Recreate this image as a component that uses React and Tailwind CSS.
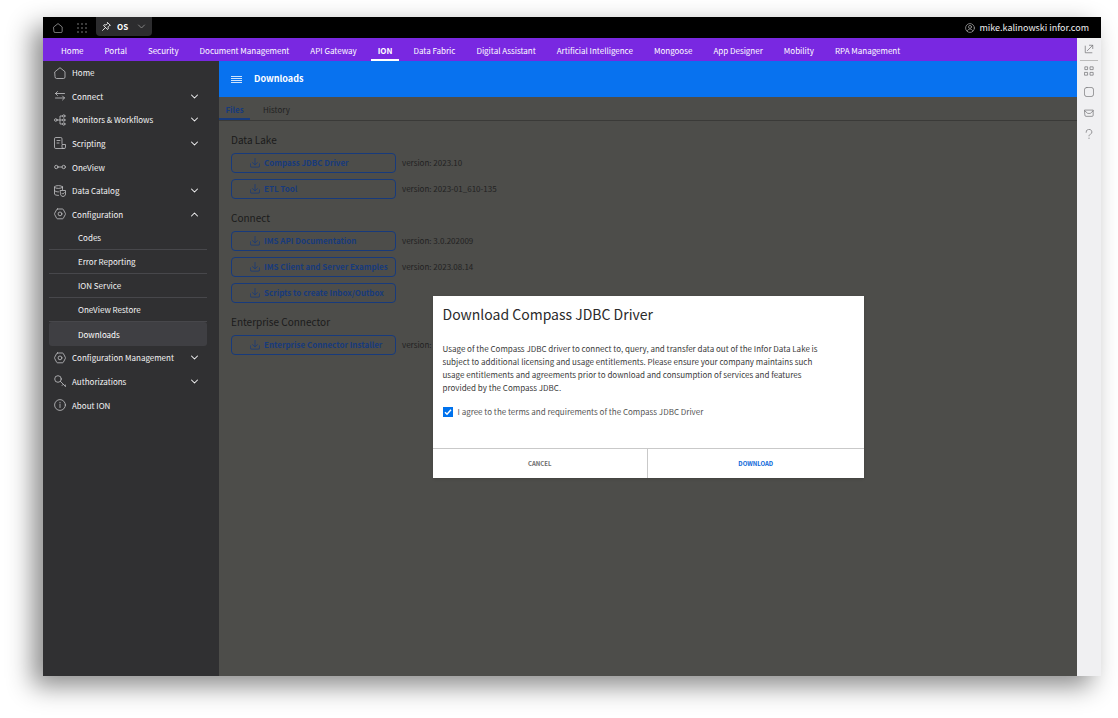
import { useState } from "react";

const NAV_ITEMS = [
  "Home",
  "Portal",
  "Security",
  "Document Management",
  "API Gateway",
  "ION",
  "Data Fabric",
  "Digital Assistant",
  "Artificial Intelligence",
  "Mongoose",
  "App Designer",
  "Mobility",
  "RPA Management",
];

const MAIN_MENU = [
  { label: "Home", icon: "home" },
  { label: "Connect", icon: "connect", chevron: "down" },
  { label: "Monitors & Workflows", icon: "workflow", chevron: "down" },
  { label: "Scripting", icon: "script", chevron: "down" },
  { label: "OneView", icon: "oneview" },
  { label: "Data Catalog", icon: "catalog", chevron: "down" },
  { label: "Configuration", icon: "config", chevron: "up" },
];

const CONFIG_MENU = ["Codes", "Error Reporting", "ION Service", "OneView Restore", "Downloads"];

const MORE_MENU = [
  { label: "Configuration Management", icon: "config", chevron: "down" },
  { label: "Authorizations", icon: "key", chevron: "down" },
  { label: "About ION", icon: "info" },
];

const SECTIONS = [
  {
    title: "Data Lake",
    files: [
      { name: "Compass JDBC Driver", version: "version: 2023.10" },
      { name: "ETL Tool", version: "version: 2023-01_610-135" },
    ],
  },
  {
    title: "Connect",
    files: [
      { name: "IMS API Documentation", version: "version: 3.0.202009" },
      { name: "IMS Client and Server Examples", version: "version: 2023.08.14" },
      { name: "Scripts to create Inbox/Outbox" },
    ],
  },
  {
    title: "Enterprise Connector",
    files: [{ name: "Enterprise Connector Installer", version: "version:" }],
  },
];

const ICONS = {
  home: <path d="M1 4.700 6 .700l5 4V10a1.500 1.500 0 0 1-1.500 1.500h-7A1.500 1.500 0 0 1 1 10Z" />,
  connect: <path d="M3.500 1.500 1.500 3.500l2 2M1.500 3.500h9M1.500 8h9M8.500 6l2 2-2 2" />,
  workflow: (
    <>
      <circle cx="1.800" cy="6" r="1.300" />
      <circle cx="9.800" cy="2" r="1.200" />
      <circle cx="9.800" cy="6" r="1.200" />
      <circle cx="9.800" cy="10" r="1.200" />
      <path d="M3.100 6h5.500M8.600 2H6v8h2.600" />
    </>
  ),
  script: (
    <>
      <path d="M8 6.500V1.800A1.300 1.300 0 0 0 6.700.500H1.800A1.300 1.300 0 0 0 .500 1.800v8.400a1.300 1.300 0 0 0 1.300 1.300h8a1.400 1.400 0 0 0 1.700-1.400V7.500H8v2.600a1.400 1.400 0 0 0 1.800 1.400" />
      <path d="M3 3.500h3M3 6h2" />
    </>
  ),
  oneview: (
    <>
      <circle cx="2.300" cy="6" r="1.700" />
      <circle cx="9.700" cy="6" r="1.700" />
      <path d="M4 6h4" />
    </>
  ),
  catalog: (
    <>
      <ellipse cx="4.500" cy="2" rx="4" ry="1.400" />
      <path d="M.500 2v7c0 .800 1.800 1.400 4 1.400M8.500 2v2.500M.500 5.500c0 .800 1.800 1.400 4 1.400" />
      <path d="M6.500 5.500h5v3.500c0 1.500-1 2.200-2.500 2.500-1.500-.300-2.500-1-2.500-2.500ZM8 8.300l.800.800 1.500-1.500" />
    </>
  ),
  config: (
    <>
      <path d="M3.500 1h5a1 1 0 0 1 .800.500l2 3.800a1.200 1.200 0 0 1 0 1.200l-2 3.800a1 1 0 0 1-.800.500h-5a1 1 0 0 1-.800-.500l-2-3.800a1.200 1.200 0 0 1 0-1.200l2-3.800A1 1 0 0 1 3.500 1Z" />
      <circle cx="6" cy="5.900" r="1.900" />
    </>
  ),
  key: (
    <>
      <circle cx="4" cy="4" r="3.300" />
      <path d="m6.500 6.500 4.800 4.800M9.300 9.300l-1.200 1.200M11.300 11.300V10" />
    </>
  ),
  info: (
    <>
      <circle cx="6" cy="6" r="5.400" />
      <path d="M6 5.200v3.300M6 3.300v.500" />
    </>
  ),
  grid: (
    <path d="M1.500 1h2.800v3.300H1V1.500ZM7.700 1H11v3.300H7.700ZM1 7.700h3.300V11H1ZM7.700 7.700H11V11H7.700Z" />
  ),
  square: <rect x=".5" y=".5" width="11" height="11" rx="3" />,
  open: <path d="M1.500 2.500v8h8M4 8l6.500-6.500M6.500 1.500h4v4" />,
  mail: <path d="M1 2.500h10v6.200a1.300 1.300 0 0 1-1.300 1.300H2.300A1.300 1.300 0 0 1 1 8.700ZM1 3.500l3.500 3h3l3.500-3" />,
  help: <path d="M2.500 4A3.500 3.200 0 1 1 7.500 6.500C6.500 7 6 7.300 6 8.300M6 10.800v.700" />,
  user: (
    <>
      <circle cx="6" cy="6" r="5.300" />
      <circle cx="6" cy="4.700" r="1.800" />
      <path d="M2.800 9.700C3 8 4.500 7.300 6 7.300s3 .700 3.200 2.400" />
    </>
  ),
  pin: <path d="M7.500.800 11.200 4.500 9.500 5 8 6.500l.300 2.800-1 .700L2 4.700l.700-1 2.800.300L7 2.500ZM4.600 7.400.800 11.200" />,
  download: <path d="M6 .500v7.500M3 5.500l3 2.800 3-2.800M.500 7v2.500A1.500 1.500 0 0 0 2 11h8a1.500 1.500 0 0 0 1.500-1.500V7" />,
  down: <path d="m2 4 4 4 4-4" />,
  up: <path d="m2 8 4-4 4 4" />,
};

function Icon({ name, className, stroke = 0.9 }) {
  return (
    <svg
      viewBox="0 0 12 12"
      fill="none"
      stroke="currentColor"
      strokeWidth={stroke}
      strokeLinecap="round"
      strokeLinejoin="round"
      aria-hidden="true"
      className={`shrink-0 ${className}`}
    >
      {ICONS[name]}
    </svg>
  );
}

function TopBar() {
  return (
    <header className="flex h-[21px] items-center bg-black pr-3 pl-[10px] text-[#a5a5a5]">
      <button type="button" aria-label="Home">
        <Icon name="home" className="size-[10px]" />
      </button>
      <button type="button" aria-label="Applications" className="ml-[14px]">
        <svg viewBox="0 0 10 10" fill="currentColor" className="size-[10px]" aria-hidden="true">
          {[1, 5, 9].map((y) => [1, 5, 9].map((x) => <circle key={`${x}-${y}`} cx={x} cy={y} r="0.7" />))}
        </svg>
      </button>
      <button
        type="button"
        className="ml-[9px] flex h-[19px] w-14 items-center self-start rounded-b-sm bg-[#2c2c2e] px-[6px] text-[8px] font-bold text-white"
      >
        <Icon name="pin" className="size-[9px]" stroke={1.1} />
        <span className="ml-[6px] flex-1 text-left">OS</span>
        <Icon name="down" className="size-[9px] text-[#8c8c8c]" stroke={1.2} />
      </button>
      <button type="button" className="ml-auto flex items-center gap-1 text-[9px] text-[#f0f0f0]">
        <Icon name="user" className="size-[10px] text-[#a5a5a5]" />
        mike.kalinowski infor.com
      </button>
    </header>
  );
}

function ProductNav() {
  return (
    <nav className="flex h-[23px] gap-[7px] bg-[#7928e1] pl-[11px] text-[8px] text-white">
      {NAV_ITEMS.map((item) => (
        <a
          key={item}
          href="#"
          className={`flex items-center border-y-2 border-t-transparent px-[7px] pt-[2px] whitespace-nowrap ${
            item === "ION" ? "border-b-white font-bold" : "border-b-transparent"
          }`}
        >
          {item}
        </a>
      ))}
    </nav>
  );
}

function MenuRow({ item }) {
  return (
    <li className="flex">
      <a href="#" className="flex flex-1 items-center pr-5 pl-[11px]">
        <Icon name={item.icon} className="size-3 text-[#c4c4c6]" stroke={0.8} />
        <span className="ml-[6px] flex-1 pt-px">{item.label}</span>
        {item.chevron ? <Icon name={item.chevron} className="size-[9px]" stroke={1.4} /> : null}
      </a>
    </li>
  );
}

function Sidebar() {
  return (
    <aside className="w-44 shrink-0 bg-[#303032] text-[8px] text-[#f4f4f5]">
      <ul className="grid h-[165px] auto-rows-fr">
        {MAIN_MENU.map((item) => (
          <MenuRow key={item.label} item={item} />
        ))}
      </ul>
      <ul className="pr-3 pl-[6px]">
        {CONFIG_MENU.map((label) => (
          <li key={label}>
            <a
              href="#"
              className={`flex h-6 items-center pt-px pl-[29px] ${
                label === "Downloads" ? "rounded-[3px] bg-[#3f3f43] text-white" : "border-b border-[#47474b]"
              }`}
            >
              {label}
            </a>
          </li>
        ))}
      </ul>
      <ul className="grid h-[71px] auto-rows-fr">
        {MORE_MENU.map((item) => (
          <MenuRow key={item.label} item={item} />
        ))}
      </ul>
    </aside>
  );
}

function FileSection({ section }) {
  return (
    <section className="pt-[9px]">
      <h2 className="mb-[3px] text-[10px] leading-5 text-[#1b1b1b]">{section.title}</h2>
      <ul className="grid gap-[6px]">
        {section.files.map((file) => (
          <li key={file.name} className="flex items-center gap-[6px]">
            <button
              type="button"
              className="flex h-5 w-[165px] items-center gap-1 rounded-[4px] border border-[#173a7c] pl-[18px] text-[8px] font-bold whitespace-nowrap text-[#173a7c]"
            >
              <Icon name="download" className="size-[10px]" />
              {file.name}
            </button>
            {file.version ? <span className="text-[8px] text-[#222]">{file.version}</span> : null}
          </li>
        ))}
      </ul>
    </section>
  );
}

function DownloadDialog() {
  const [agreed, setAgreed] = useState(true);

  return (
    <div
      role="dialog"
      aria-labelledby="dialog-title"
      className="flex w-[431px] flex-col bg-white text-[#3a3a3a] shadow-sm"
    >
      <div className="px-[10px] pt-2 pb-[29px]">
        <h2 id="dialog-title" className="text-[14px] leading-5 text-[#2b2b2b]">
          Download Compass JDBC Driver
        </h2>
        <p className="mt-[18px] pr-8 text-[8px] leading-[13px]">
          Usage of the Compass JDBC driver to connect to, query, and transfer data out of the Infor Data Lake is
          subject to additional licensing and usage entitlements. Please ensure your company maintains such usage
          entitlements and agreements prior to download and consumption of services and features provided by the
          Compass JDBC.
        </p>
        <label className="mt-[11px] flex items-center gap-[5px] text-[8px] leading-[14px] text-[#555]">
          <span className="grid size-[10px] place-items-center">
            <input
              type="checkbox"
              checked={agreed}
              onChange={(e) => setAgreed(e.target.checked)}
              className="col-start-1 row-start-1 size-[10px] appearance-none border border-[#0072ed] checked:bg-[#0072ed]"
            />
            {agreed ? (
              <svg
                viewBox="0 0 10 10"
                fill="none"
                stroke="white"
                strokeWidth="1.5"
                className="pointer-events-none col-start-1 row-start-1 size-[10px]"
                aria-hidden="true"
              >
                <path d="m2 5.200 2 2 4-4.400" />
              </svg>
            ) : null}
          </span>
          I agree to the terms and requirements of the Compass JDBC Driver
        </label>
      </div>
      <div className="grid h-[30px] grid-cols-2 border-t border-[#c9c9c9] text-[6px] font-bold">
        <button type="button" className="border-r border-[#c9c9c9] text-[#6b6b6b]">
          CANCEL
        </button>
        <button type="button" disabled={!agreed} className="text-[#0a66d8]">
          DOWNLOAD
        </button>
      </div>
    </div>
  );
}

function Downloads() {
  return (
    <main className="flex min-w-0 flex-1 flex-col bg-[#4d4d4a]">
      <div className="flex h-9 items-center bg-[#0872ef] pl-3 text-white">
        <button type="button" aria-label="Toggle menu" className="grid w-[11px] gap-px">
          <span className="h-px bg-white/80" />
          <span className="h-px bg-white/80" />
          <span className="h-px bg-white/80" />
          <span className="h-px bg-white/80" />
        </button>
        <h1 className="ml-3 text-[9px] font-bold">Downloads</h1>
      </div>
      <div className="relative flex-1">
        <div role="tablist" className="flex h-6 border-b border-[#3a3a38] text-[8px] text-[#222]">
          <button
            type="button"
            role="tab"
            aria-selected="true"
            className="w-[31px] border-b-2 border-[#173a7c] pt-1 font-bold text-[#173a7c]"
          >
            Files
          </button>
          <button type="button" role="tab" aria-selected="false" className="ml-[13px] pt-[2px]">
            History
          </button>
        </div>
        <div className="pl-3">
          {SECTIONS.map((section) => (
            <FileSection key={section.title} section={section} />
          ))}
        </div>
        <div className="absolute inset-0 flex items-center justify-center">
          <DownloadDialog />
        </div>
      </div>
    </main>
  );
}

function ToolRail() {
  return (
    <aside className="flex w-6 shrink-0 flex-col items-center bg-[#f0f0f2] px-[3px] pt-[6px] text-[#77777a]">
      <button type="button" aria-label="Open in new window" className="w-full border-b border-[#bbb] pb-[6px]">
        <Icon name="open" className="mx-auto size-[10px]" />
      </button>
      <div className="mt-[5px] flex flex-col gap-[11px]">
        {["grid", "square", "mail", "help"].map((name) => (
          <button key={name} type="button" aria-label={name}>
            <Icon name={name} className="size-[10px]" />
          </button>
        ))}
      </div>
    </aside>
  );
}

export default function App() {
  return (
    <div className="flex min-h-screen bg-white pt-[17px] pr-[17px] pb-[42px] pl-[43px] font-['Noto_Sans_CJK_SC','Noto_Sans',sans-serif]">
      <div className="flex min-w-0 flex-1 flex-col shadow-[-10px_10px_24px_rgba(0,0,0,0.46)]">
        <TopBar />
        <div className="flex flex-1">
          <div className="flex min-w-0 flex-1 flex-col">
            <ProductNav />
            <div className="flex flex-1">
              <Sidebar />
              <Downloads />
            </div>
          </div>
          <ToolRail />
        </div>
      </div>
    </div>
  );
}
